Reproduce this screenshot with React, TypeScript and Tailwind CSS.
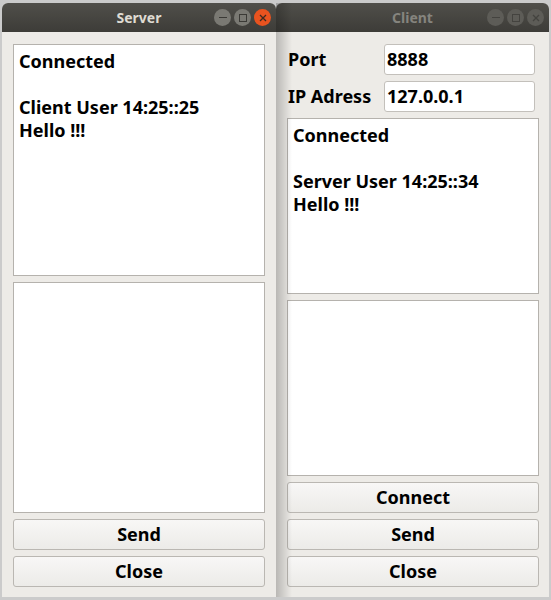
import React from "react";

const font = { fontFamily: '"Noto Sans", "Open Sans", sans-serif' };

function TitleButtons({ active }: { active: boolean }) {
  const circle = active ? "bg-[#7a7973]" : "bg-[#5d5c57]";
  const glyph = active ? "#3b3a36" : "#44433f";
  return (
    <div className="flex items-center gap-[3px]">
      <div className={`w-[17px] h-[17px] rounded-full ${circle} flex items-center justify-center`}>
        <div className="w-[8px] h-[1.5px]" style={{ background: glyph }} />
      </div>
      <div className={`w-[17px] h-[17px] rounded-full ${circle} flex items-center justify-center`}>
        <div className="w-[8px] h-[8px] border" style={{ borderColor: glyph }} />
      </div>
      <div
        className={`w-[17px] h-[17px] rounded-full flex items-center justify-center ${
          active ? "bg-[#e9531f]" : "bg-[#5d5c57]"
        }`}
      >
        <svg width="8" height="8" viewBox="0 0 8 8">
          <path d="M1 1 L7 7 M7 1 L1 7" stroke={active ? "#3b2a20" : glyph} strokeWidth="1.3" />
        </svg>
      </div>
    </div>
  );
}

function TitleBar({ title, active }: { title: string; active: boolean }) {
  return (
    <div className="relative h-[29px] rounded-t-[6px] bg-gradient-to-b from-[#504f4a] to-[#3d3c38] flex items-center justify-center shrink-0">
      <span
        className={`text-[14px] font-bold ${active ? "text-[#dfdbd2]" : "text-[#85847e]"}`}
        style={font}
      >
        {title}
      </span>
      <div className="absolute right-[5px] top-[6px]">
        <TitleButtons active={active} />
      </div>
    </div>
  );
}

function Btn({ label }: { label: string }) {
  return (
    <div className="h-[31px] shrink-0 rounded-[3px] border border-[#bab7b2] bg-gradient-to-b from-[#f8f7f6] to-[#ecebe8] flex items-center justify-center text-[18px] font-bold text-black">
      {label}
    </div>
  );
}

function TextBox({ lines, h }: { lines: string[]; h: string }) {
  return (
    <div className={`${h} shrink-0 border border-[#b5b2ad] bg-white pl-[5px] pt-[5px] text-[18px] leading-[23px] font-bold text-black`}>
      {lines.map((l, i) => (
        <div key={i} className="h-[23px] whitespace-pre">
          {l}
        </div>
      ))}
    </div>
  );
}

function Field({ label, value }: { label: string; value: string }) {
  return (
    <div className="flex items-center h-[31px] shrink-0">
      <div className="flex-1 pl-[1px] text-[18px] font-bold text-black">{label}</div>
      <div className="w-[151px] h-[31px] mr-[4px] rounded-[3px] border border-[#c3c0bb] bg-white flex items-center pl-[2px] text-[18px] font-bold text-black">
        {value}
      </div>
    </div>
  );
}

export default function App() {
  return (
    <div className="relative w-[551px] h-[600px] bg-[#cbcbcb] overflow-hidden" style={font}>
      {/* Client window */}
      <div className="absolute left-[276px] top-[3px] w-[273px] h-[594px] flex flex-col bg-[#edebe7] rounded-t-[6px]">
        <TitleBar title="Client" active={false} />
        <div className="flex flex-col gap-[6px] pt-[12px] pl-[11px] pr-[10px]">
          <Field label="Port" value="8888" />
          <Field label="IP Adress" value="127.0.0.1" />
          <TextBox h="h-[176px]" lines={["Connected", " ", "Server User 14:25::34", "Hello !!!"]} />
          <TextBox h="h-[176px]" lines={[]} />
          <Btn label="Connect" />
          <Btn label="Send" />
          <Btn label="Close" />
        </div>
        <div className="absolute left-0 top-0 bottom-0 w-[16px] bg-gradient-to-r from-[rgba(0,0,0,0.22)] to-transparent pointer-events-none" />
      </div>

      {/* Server window */}
      <div className="absolute left-[2px] top-[3px] w-[274px] h-[594px] flex flex-col bg-[#edebe7] rounded-t-[6px]">
        <TitleBar title="Server" active={true} />
        <div className="flex flex-col gap-[6px] pt-[12px] px-[11px]">
          <TextBox h="h-[232px]" lines={["Connected", " ", "Client User 14:25::25", "Hello !!!"]} />
          <TextBox h="h-[231px]" lines={[]} />
          <Btn label="Send" />
          <Btn label="Close" />
        </div>
      </div>
    </div>
  );
}
